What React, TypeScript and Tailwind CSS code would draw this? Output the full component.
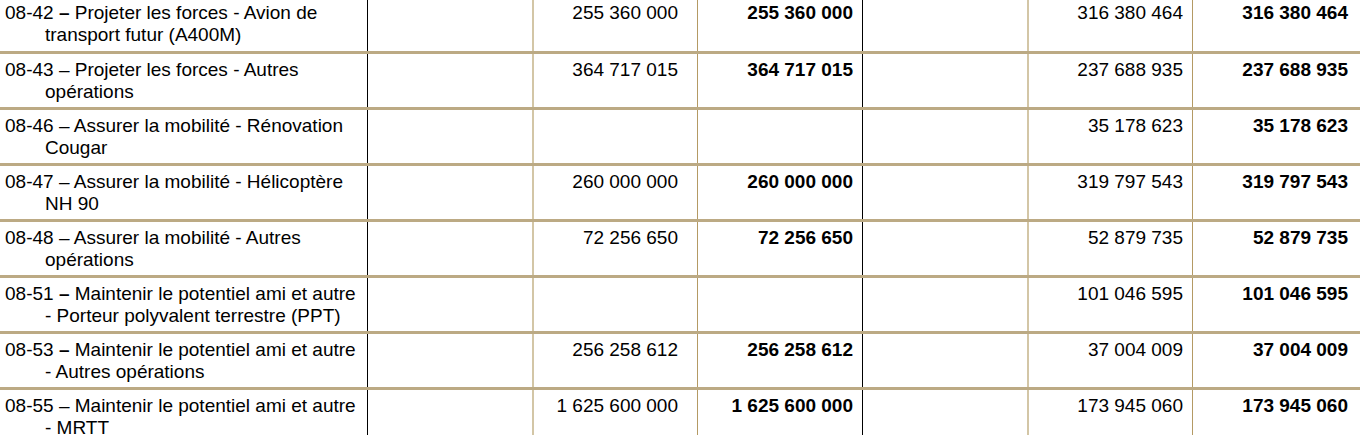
import React from "react";

type Row = {
  code: string;
  boldDash: boolean;
  label: string;
  cp?: string;
  ae?: string;
};

const rows: Row[] = [
  { code: "08-42", boldDash: true, label: "Projeter les forces - Avion de transport futur (A400M)", cp: "255 360 000", ae: "316 380 464" },
  { code: "08-43", boldDash: false, label: "Projeter les forces - Autres opérations", cp: "364 717 015", ae: "237 688 935" },
  { code: "08-46", boldDash: false, label: "Assurer la mobilité - Rénovation Cougar", ae: "35 178 623" },
  { code: "08-47", boldDash: false, label: "Assurer la mobilité - Hélicoptère NH 90", cp: "260 000 000", ae: "319 797 543" },
  { code: "08-48", boldDash: false, label: "Assurer la mobilité - Autres opérations", cp: "72 256 650", ae: "52 879 735" },
  { code: "08-51", boldDash: true, label: "Maintenir le potentiel ami et autre - Porteur polyvalent terrestre (PPT)", ae: "101 046 595" },
  { code: "08-53", boldDash: true, label: "Maintenir le potentiel ami et autre - Autres opérations", cp: "256 258 612", ae: "37 004 009" },
  { code: "08-55", boldDash: false, label: "Maintenir le potentiel ami et autre - MRTT", cp: "1 625 600 000", ae: "173 945 060" },
];

function Num({ value, bold, pr, border, pt }: { value?: string; bold?: boolean; pr: string; border: string; pt: string }) {
  return (
    <div className={`h-full text-right ${pt} ${pr} ${border} ${bold ? "font-bold" : ""}`}>
      {value}
    </div>
  );
}

export default function App() {
  return (
    <div
      className="w-[1360px] h-[435px] overflow-hidden bg-white text-black text-[19px] leading-[22px]"
      style={{ fontFamily: '"Liberation Sans", Arial, sans-serif' }}
    >
      {rows.map((r, i) => {
        const first = i === 0;
        const pt = first ? "pt-[2px]" : "pt-[5px]";
        return (
          <div
            key={r.code}
            className={`grid grid-cols-[367px_165px_165px_165px_165px_165px_165px] border-b-[3px] border-[#bcaa84] ${first ? "h-[54px]" : "h-[56px]"}`}
          >
            <div className={`pl-[45px] -indent-[40px] pr-2 ${pt}`}>
              {r.code} <span className={r.boldDash ? "font-bold" : ""}>–</span> {r.label}
            </div>
            <div className="border-l border-black" />
            <Num value={r.cp} pt={pt} pr="pr-[19px]" border="border-l-2 border-[#d3c6a6]" />
            <Num value={r.cp} pt={pt} bold pr="pr-[9px]" border="border-l border-[#b49a64]" />
            <div className="border-l border-black" />
            <Num value={r.ae} pt={pt} pr="pr-[9px]" border="border-l-2 border-[#d3c6a6]" />
            <Num value={r.ae} pt={pt} bold pr="pr-[9px]" border="border-l border-[#b49a64]" />
          </div>
        );
      })}
    </div>
  );
}
